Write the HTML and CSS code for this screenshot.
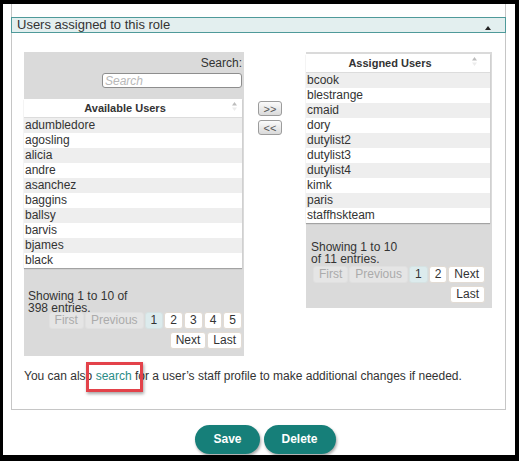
FILE: index.html
```html
<!DOCTYPE html>
<html>
<head>
    <meta charset="utf-8">
    <title>Users assigned to this role</title>
    <link rel="stylesheet" href="styles.css">
</head>
<body>
<div class="screen">
    <div class="panel">
        <div class="panel-head">
            <span>Users assigned to this role</span>
            <i class="caret"></i>
        </div>

        <div class="picker">
            <div class="list-box avail">
                <div class="filter">
                    <label for="q">Search:</label>
                    <input type="text" id="q" placeholder="Search">
                </div>
                <table class="users">
                    <thead>
                    <tr>
                        <th>Available Users
                            <svg class="sort" width="5" height="9" viewBox="0 0 5 9"><polygon points="0,3.5 2.5,0 5,3.5" fill="#bdbdbd"/><polygon points="0,5.5 2.5,9 5,5.5" fill="#ececec"/></svg>
                        </th>
                    </tr>
                    </thead>
                    <tbody>
                    <tr><td>adumbledore</td></tr>
                    <tr><td>agosling</td></tr>
                    <tr><td>alicia</td></tr>
                    <tr><td>andre</td></tr>
                    <tr><td>asanchez</td></tr>
                    <tr><td>baggins</td></tr>
                    <tr><td>ballsy</td></tr>
                    <tr><td>barvis</td></tr>
                    <tr><td>bjames</td></tr>
                    <tr><td>black</td></tr>
                    </tbody>
                </table>
                <div class="info">Showing 1 to 10 of 398 entries.</div>
                <div class="pager">
                    <button type="button" class="off">First</button>
                    <button type="button" class="off">Previous</button>
                    <button type="button" class="on">1</button>
                    <button type="button">2</button>
                    <button type="button">3</button>
                    <button type="button">4</button>
                    <button type="button">5</button>
                    <button type="button">Next</button>
                    <button type="button">Last</button>
                </div>
            </div>

            <div class="moves">
                <button type="button">&gt;&gt;</button>
                <button type="button">&lt;&lt;</button>
            </div>

            <div class="list-box assigned">
                <table class="users">
                    <thead>
                    <tr>
                        <th>Assigned Users
                            <svg class="sort" width="5" height="9" viewBox="0 0 5 9"><polygon points="0,3.5 2.5,0 5,3.5" fill="#bdbdbd"/><polygon points="0,5.5 2.5,9 5,5.5" fill="#ececec"/></svg>
                        </th>
                    </tr>
                    </thead>
                    <tbody>
                    <tr><td>bcook</td></tr>
                    <tr><td>blestrange</td></tr>
                    <tr><td>cmaid</td></tr>
                    <tr><td>dory</td></tr>
                    <tr><td>dutylist2</td></tr>
                    <tr><td>dutylist3</td></tr>
                    <tr><td>dutylist4</td></tr>
                    <tr><td>kimk</td></tr>
                    <tr><td>paris</td></tr>
                    <tr><td>staffhskteam</td></tr>
                    </tbody>
                </table>
                <div class="info">Showing 1 to 10 of 11 entries.</div>
                <div class="pager">
                    <button type="button" class="off">First</button>
                    <button type="button" class="off">Previous</button>
                    <button type="button" class="on">1</button>
                    <button type="button">2</button>
                    <button type="button">Next</button>
                    <button type="button">Last</button>
                </div>
            </div>
        </div>

        <p class="note">You can also <a href="#" class="hl">search</a> for a user’s staff profile to make additional changes if needed.</p>
    </div>

    <div class="actions">
        <button type="button" class="pill">Save</button>
        <button type="button" class="pill">Delete</button>
    </div>
</div>
</body>
</html>
```

FILE: styles.css
```css
*{
    margin: 0;
    padding: 0;
    box-sizing: border-box;
}

body{
    background: #000;
    font-family: "Liberation Sans", Arial, sans-serif;
    font-size: 12px;
    color: #333;
}

.screen{
    margin: 4px 4px 0 3px;
    height: 451px;
    background: #fff;
    overflow: hidden;
}

.panel{
    margin-left: 8px;
    width: 495px;
    padding-top: 13px;
    border: 1px solid #c6c6c6;
    border-top: 0;
}

.panel-head{
    display: flex;
    justify-content: space-between;
    align-items: center;
    height: 16px;
    margin: 0 -1px;
    padding: 0 14px 0 5px;
    border: 1px solid #4f9a9a;
    background: #e3efef;
    font-size: 13px;
    line-height: 14px;
}

.caret{
    width: 0;
    height: 0;
    margin-top: 5px;
    border-left: 3.5px solid transparent;
    border-right: 3.5px solid transparent;
    border-bottom: 4px solid #222;
}

/* 两个列表并排 */
.picker{
    display: flex;
    align-items: flex-start;
    margin-top: 19px;
    padding-left: 12px;
}

.list-box{
    background: #dadada;
}

.avail{
    width: 220px;
    padding: 4px 0 7px;
}

.assigned{
    width: 186px;
    margin-left: 24px;
    padding: 2px 0 5px;
}

.filter{
    text-align: right;
    padding-right: 2px;
    line-height: 14px;
}

.filter input{
    display: block;
    width: 140px;
    height: 15px;
    margin: 3px 0 11px auto;
    padding: 0 2px;
    border: 1px solid #8e8e8e;
    border-radius: 3px;
    font: 12px "Liberation Sans", Arial, sans-serif;
    background: #fff;
}

.filter input::placeholder{
    color: #b8b8b8;
    font-style: italic;
}

.users{
    width: calc(100% - 2px);
    border-collapse: collapse;
    background: #fff;
    box-shadow: 0 1px 1px rgba(0, 0, 0, .25);
}

.users th{
    position: relative;
    height: 18px;
    padding: 0 18px 0 2px;
    border-bottom: 1px solid #dcdcdc;
    font-size: 11px;
    font-weight: bold;
    color: #333;
}

.users .sort{
    position: absolute;
    right: 5px;
    top: 3px;
}

.assigned .users .sort{
    right: 13px;
}

.users td{
    height: 15px;
    padding: 0 1px;
    line-height: 15px;
    white-space: nowrap;
}

.users tbody tr:nth-child(odd) td{
    background: #eeeeee;
}

.info{
    width: 50%;
    height: 22px;
    margin-top: 22px;
    padding-left: 4px;
    line-height: 12px;
}

.assigned .info{
    height: 25px;
    margin-top: 18px;
    padding-left: 5px;
}

.pager{
    display: flex;
    flex-wrap: wrap;
    justify-content: flex-end;
    gap: 3px 1px;
    padding-right: 2px;
}

.assigned .pager{
    padding-right: 7px;
}

.pager button{
    height: 17px;
    padding: 0 5px;
    border: 1px solid #e2dbd3;
    border-radius: 3px;
    background: #fff;
    font: 12px "Liberation Sans", Arial, sans-serif;
    color: #333;
}

.pager button.off{
    background: #e5e5e5;
    border-color: #e0e0e0;
    color: #ababab;
}

.pager button.on{
    background: #dcebed;
    border-color: #d6e2e2;
}

.moves{
    display: flex;
    flex-direction: column;
    gap: 4px;
    margin: 49px 0 0 14px;
}

.moves button{
    width: 24px;
    height: 15px;
    border: 1px solid #9c9c9c;
    border-radius: 3px;
    background: linear-gradient(#fbfbfb, #dadada);
    font: 11px "Liberation Sans", Arial, sans-serif;
    line-height: 12px;
    color: #555;
}

.note{
    margin: 13px 0 25px 12px;
    line-height: 15px;
}

.note a{
    color: #2b8c87;
    text-decoration: none;
}

/* 红色标注框 */
.hl{
    position: relative;
}

.hl::after{
    content: "";
    position: absolute;
    left: -10px;
    right: -11px;
    top: -7px;
    bottom: -9px;
    border: 3px solid #e3424a;
    box-shadow: 1px 2px 3px rgba(0, 0, 0, .35);
}

.actions{
    display: flex;
    justify-content: center;
    gap: 4px;
    margin-top: 15px;
    padding-left: 13px;
}

.pill{
    height: 29px;
    padding: 0 18px;
    border: 0;
    border-radius: 15px;
    background: #167f79;
    color: #fff;
    font: bold 12px "Liberation Sans", Arial, sans-serif;
    box-shadow: 1px 2px 3px rgba(0, 0, 0, .35);
}
```
